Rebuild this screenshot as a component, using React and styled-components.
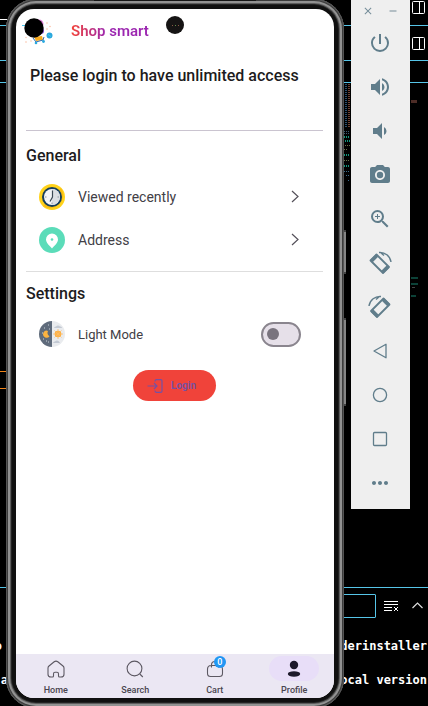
import React from "react";
import styled, { createGlobalStyle } from "styled-components";
import {
  MdPowerSettingsNew,
  MdVolumeUp,
  MdVolumeDown,
  MdPhotoCamera,
  MdZoomIn,
  MdMoreHoriz,
  MdClose,
  MdRemove,
} from "react-icons/md";

const Global = createGlobalStyle`
  *, *::before, *::after { box-sizing: border-box; }
  body { margin: 0; background: #000; }
  button { font: inherit; color: inherit; background: none; border: 0; padding: 0; cursor: pointer; }
  h1, h2, p { margin: 0; }
  svg { display: block; flex: none; }
`;

const Desktop = styled.div`
  position: relative;
  height: 100vh;
  min-height: 640px;
  overflow: hidden;
  background: #000;
  font-family: Roboto, sans-serif;
`;

/* ---------- code editor behind the emulator ---------- */

const Editor = styled.div`
  position: absolute;
  inset: 0;
  display: flex;
  flex-direction: column;
  color: #fff;
`;

const EditorBar = styled.div`
  display: flex;
  flex: none;
  align-items: ${(p) => p.$align || "center"};
  justify-content: space-between;
  height: ${(p) => p.$height}px;
  padding: 1px 3px 0 0;
  border-bottom: 1px solid #56c5e8;
`;

const SearchEdge = styled.span`
  align-self: flex-end;
  width: 12px;
  height: 6px;
  border-top: 1px solid #fff;
`;

const EditorBody = styled.div`
  display: flex;
  flex: 1;
  justify-content: space-between;
`;

const CurrentLine = styled.span`
  width: 12px;
  height: 18px;
  margin-top: 288px;
  border: solid #f38518;
  border-width: 1px 0;
`;

const Terminal = styled.div`
  flex: none;
  height: 119px;
  padding-top: 6px;
  border-top: 1px solid #56c5e8;
`;

const TerminalBar = styled.div`
  display: flex;
  align-items: center;
  justify-content: flex-end;
  gap: 14px;
  height: 24px;
  padding-right: 5px;
`;

const TerminalFilter = styled.input`
  width: 120px;
  height: 24px;
  margin-right: -6px;
  color: #fff;
  background: #000;
  border: 1px solid #56c5e8;
  border-radius: 1px;
`;

const TerminalLine = styled.p`
  display: flex;
  justify-content: space-between;
  padding: 0 1px 0 0;
  margin-top: ${(p) => (p.$first ? 11 : 0)}px;
  font: 700 12px/34px "DejaVu Sans Mono", monospace;
  white-space: pre;
`;

const LineStart = styled.span`
  display: flex;
  justify-content: flex-end;
  width: ${(p) => p.$width}px;
`;

/* ---------- emulator ---------- */

const Emulator = styled.div`
  position: relative;
  display: flex;
  align-items: flex-start;
  gap: 7px;
  padding: 0 18px 0 6px;
`;

const Phone = styled.div`
  position: relative;
  display: flex;
  flex: 1;
  height: calc(100vh + 3px);
  min-height: 643px;
  margin-top: -1px;
  padding: 10px;
  border-radius: 30px;
  background: #101010;
  box-shadow: inset 0 0 0 1px #555, inset 0 0 0 2px #3c3c3c, inset 0 0 0 4px #929292,
    inset 0 0 0 5px #5c5c5c, inset 0 0 0 6px #222;
`;

const SideKey = styled.span`
  position: absolute;
  top: ${(p) => p.$top}px;
  left: 100%;
  width: 2px;
  height: ${(p) => p.$height}px;
  background: #858585;
  border: solid #444;
  border-width: 2px 0;
`;

const Speaker = styled.span`
  position: absolute;
  top: 0;
  left: 26%;
  right: 26%;
  height: 2px;
  background: #161616;
`;

const Screen = styled.div`
  position: relative;
  display: flex;
  flex: 1;
  flex-direction: column;
  min-width: 0;
  overflow: hidden;
  border-radius: 18px;
  background: #fff;
  color: #1d1b20;
`;

const Camera = styled.span`
  position: absolute;
  top: 7px;
  left: 50%;
  display: flex;
  align-items: center;
  justify-content: center;
  gap: 2px;
  width: 18px;
  height: 18px;
  margin-left: -9px;
  border-radius: 50%;
  background: #161414;
`;

const Lens = styled.i`
  width: 1px;
  height: 1px;
  background: ${(p) => p.$color};
`;

const AppBar = styled.header`
  display: flex;
  align-items: center;
  gap: 16px;
  height: 43px;
  padding-left: 5px;
`;

const Title = styled.h1`
  font-size: 15px;
  line-height: 20px;
  font-weight: 600;
  color: transparent;
  background: linear-gradient(90deg, #f44336, #9c27b0 45%);
  background-clip: text;
`;

const Content = styled.main`
  flex: 1;
  display: flex;
  flex-direction: column;
  padding: 0 11px 0 10px;
`;

const Notice = styled.p`
  padding: 14px 0 44px 4px;
  font-size: 16px;
  line-height: 20px;
  font-weight: 500;
  white-space: nowrap;
`;

const Section = styled.section`
  display: flex;
  flex-direction: column;
  padding-top: ${(p) => p.$top}px;
  padding-bottom: ${(p) => p.$bottom}px;
  border-top: 1px solid ${(p) => p.$line};
`;

const SectionTitle = styled.h2`
  margin-bottom: 8px;
  font-size: 16px;
  line-height: 22px;
  font-weight: 500;
`;

const Row = styled.button`
  display: flex;
  align-items: center;
  gap: 13px;
  height: 43px;
  padding: 0 24px 0 13px;
  font-size: 14px;
  color: #424046;
  text-align: left;
`;

const SwitchRow = styled(Row).attrs({ as: "label" })`
  height: 42px;
  padding-right: 22px;
  font-size: 13px;
  cursor: pointer;
`;

const RowLabel = styled.span`
  flex: 1;
`;

const Switch = styled.input`
  appearance: none;
  display: flex;
  align-items: center;
  width: 40px;
  height: 25px;
  margin: 0;
  padding: 0 4px;
  border: 2px solid #8a858e;
  border-radius: 13px;
  background: #e6e0e9;
  &::before {
    content: "";
    width: 12px;
    height: 12px;
    border-radius: 50%;
    background: #79747e;
  }
  &:checked { justify-content: flex-end; }
`;

const LoginButton = styled.button`
  display: flex;
  align-items: center;
  align-self: center;
  gap: 8px;
  height: 31px;
  margin-top: 15px;
  padding: 0 20px 0 14px;
  border-radius: 16px;
  background: #f0433a;
  color: #7351a5;
  font-size: 10px;
  font-weight: 600;
`;

const NavBar = styled.nav`
  display: grid;
  grid-template-columns: repeat(4, 1fr);
  height: 44px;
  background: #ebe7f3;
`;

const NavItem = styled.button`
  display: flex;
  flex-direction: column;
  align-items: center;
  gap: 2px;
  padding-top: 2px;
  font-size: 9px;
  line-height: 14px;
  font-weight: 500;
  color: #49454f;
`;

const NavIcon = styled.span`
  position: relative;
  display: grid;
  place-items: center;
  width: 50px;
  height: 25px;
  border-radius: 13px;
  background: ${(p) => (p.$active ? "#e8def8" : "transparent")};
`;

const Badge = styled.span`
  position: absolute;
  top: 0;
  left: 24px;
  width: 12px;
  height: 12px;
  border-radius: 50%;
  background: #2196f3;
  color: #fff;
  font-size: 9px;
  line-height: 12px;
  text-align: center;
`;

const Toolbar = styled.aside`
  display: flex;
  flex: none;
  flex-direction: column;
  width: 59px;
  padding: 0 1px 4px 0;
  background: #efefef;
  color: #607d8b;
`;

const WindowControls = styled.div`
  display: flex;
  justify-content: center;
  gap: 13px;
  height: 21px;
  opacity: 0.85;
`;

const ToolButton = styled.button`
  display: grid;
  place-items: center;
  height: 44px;
`;

/* ---------- drawings ---------- */

const SplitIcon = () => (
  <svg width="13" height="13" viewBox="0 0 13 13" fill="none" stroke="#fff">
    <rect x=".5" y=".5" width="12" height="12" rx="1" />
    <path d="M7.5 1v11" />
  </svg>
);

const Minimap = () => (
  <svg width="84" height="220" viewBox="0 0 84 220" shapeRendering="crispEdges" strokeWidth="1">
    <g strokeDasharray="1 1">
      <path d="M1.5 1v44" stroke="#27506f" strokeWidth="2" />
      <path d="M5 1v44" stroke="#71412f" strokeWidth="2" />
      <path d="M0 48h6M0 50h6" stroke="#3a5875" />
      <path d="M0 54h5M1 58h5M0 72h6M0 83h6" stroke="#13987e" strokeWidth="2" />
      <path d="M1 62h5M0 66h4M0 77h6" stroke="#68714b" />
      <path d="M0 88h6M2 92h4M4 97h2" stroke="#3a6c8c" />
    </g>
    <path d="M67 18h6" stroke="#4d2c26" strokeWidth="3" />
    <path d="M67 195h7M67 201h7M67 213h5" stroke="#0c4238" strokeWidth="2" />
    <path d="M68 204h3" stroke="#444" />
  </svg>
);

const ClearIcon = () => (
  <svg width="14" height="11" viewBox="0 0 14 11" fill="none" stroke="#fff">
    <path d="M0 .5h14M0 3.5h14M0 6.5h8M0 9.5h8M10 6l4 4M14 6l-4 4" />
  </svg>
);

const ChevronUp = () => (
  <svg width="11" height="11" viewBox="0 0 11 11" fill="none" stroke="#ddd" strokeWidth="1.200">
    <path d="M.5 7l5-5 5 5" />
  </svg>
);

const Logo = () => (
  <svg width="34" height="28" viewBox="0 0 34 28">
    <circle cx="18" cy="7" r="4.500" fill="#e07fd8" />
    <circle cx="20" cy="14" r="3" fill="#7b4fd0" />
    <path d="M13 20l8-1 1 4-7 1z" fill="#f6a91d" />
    <path d="M12 21l3 4 7-2 1-3" fill="none" stroke="#2f6db5" />
    <circle cx="15" cy="26" r="1.300" fill="#28a9df" />
    <circle cx="22.500" cy="24.500" r="1.400" fill="#28a9df" />
    <circle cx="28.500" cy="18.500" r="3" fill="#2aa7dc" />
    <path d="M27 17.500l3 2M1 8.500h3" stroke="#45c4ed" />
    <circle cx="13" cy="11" r="9.700" fill="#000" />
    <g fill="#fbc0a5">
      <circle cx="26" cy="6" r=".8" /><circle cx="29" cy="9.500" r=".8" />
      <circle cx="26" cy="12" r=".8" /><circle cx="5" cy="20.500" r=".7" />
      <circle cx="5" cy="25" r=".8" /><circle cx="10" cy="24" r=".7" />
    </g>
  </svg>
);

const ClockIcon = () => (
  <svg width="26" height="26" viewBox="0 0 26 26">
    <circle cx="13" cy="13" r="13" fill="#ffd21a" />
    <path d="M22 4a13 13 0 0 1-18 18z" fill="#f9bd10" />
    <circle cx="13" cy="13" r="10" fill="#173f5c" />
    <circle cx="13" cy="13" r="8" fill="#f3f5f7" />
    <path d="M13 5a8 8 0 0 1 0 16z" fill="#dcdfe3" />
    <path d="M13.500 6.500V13l-2.500 4.500" fill="none" stroke="#3c4954" strokeWidth="1.200" />
    <path d="M6 13h1.500M18.500 13H20M13 18.500V20" stroke="#8e979e" />
  </svg>
);

const PinIcon = () => (
  <svg width="26" height="26" viewBox="0 0 26 26">
    <circle cx="13" cy="13" r="13" fill="#5bdcb9" />
    <path d="M13 21.500c-2-2.500-6-5.300-6-9a6 6 0 0 1 12 0c0 3.700-4 6.500-6 9z" fill="#fff" />
    <circle cx="13" cy="12.500" r="1.300" fill="#5bdcb9" />
  </svg>
);

const ThemeIcon = () => (
  <svg width="26" height="26" viewBox="0 0 26 26">
    <path d="M13 0a13 13 0 0 0 0 26z" fill="#5f6b7b" />
    <path d="M13 0a13 13 0 0 1 0 26z" fill="#e9ebee" />
    <path d="M9 10a3.500 3.500 0 1 0 1.500 5.200A3.700 3.700 0 0 1 9 10z" fill="#fdb440" />
    <circle cx="19" cy="13" r="3.300" fill="#ffad3a" />
    <path d="M19 8v10M14 13h10M15.500 9.500l7 7M22.500 9.500l-7 7" stroke="#fdbd66" strokeWidth=".8" />
    <path d="M15 7a2 2 0 0 1 2-1.500 2.500 2.500 0 0 1 4 0c1 0 2 .5 2 1.500zM14 22a2 2 0 0 1 2-1.500 2.500 2.500 0 0 1 4 0l1 1.500z" fill="#c3c9d3" />
    <path d="M9 4h1M5 7h1M3 12h1M4 18h1M9 21h1M10 8h1M7 20h1" stroke="#ccd2da" />
  </svg>
);

const ChevronRight = () => (
  <svg width="8" height="13" viewBox="0 0 8 13" fill="none" stroke="#55515a" strokeWidth="1.200">
    <path d="M1 1l6 5.500L1 12" />
  </svg>
);

const LoginIcon = () => (
  <svg width="16" height="14" viewBox="0 0 16 14" fill="none" stroke="currentColor" strokeWidth="1.200">
    <path d="M.5 7H10M7 4l3 3-3 3M8 2.500C8 1.300 8.500.7 9.300.7h4.400c.8 0 1.300.5 1.300 1.300v10c0 .8-.5 1.300-1.300 1.300H9.300c-.8 0-1.300-.5-1.300-1.800" />
  </svg>
);

const navSvg = { width: 18, height: 18, viewBox: "0 0 18 18", fill: "none", stroke: "#5d5963", strokeWidth: 1.1 };

const HomeIcon = () => (
  <svg {...navSvg}>
    <path d="M6.500 15.500v-1.700c0-.9.700-1.500 1.500-1.500h2c.8 0 1.500.6 1.500 1.500V16c0 .6.500 1 1 1h1.500c1.700 0 3-1.200 3-2.800V8c0-.8-.4-1.500-1-2l-5.200-4.200a3 3 0 0 0-3.600 0L2 6c-.6.500-1 1.200-1 2v6.200C1 15.800 2.300 17 4 17h1.500c.6 0 1-.4 1-1z" />
  </svg>
);

const SearchIcon = () => (
  <svg {...navSvg}>
    <circle cx="8.500" cy="8.500" r="7.400" />
    <path d="M13.800 14l3 3" />
  </svg>
);

const BagIcon = () => (
  <svg {...navSvg}>
    <path d="M5 5.500h8c2.300 0 3.500 1.500 3.500 4v4c0 2-1.300 3-3.100 3H4.600c-1.800 0-3.100-1-3.100-3v-4c0-2.500 1.200-4 3.500-4zM5.500 7.500V5a3.500 3.500 0 0 1 7 0v2.500" />
  </svg>
);

const ProfileIcon = () => (
  <svg width="18" height="18" viewBox="0 0 18 18" fill="#1d192b">
    <circle cx="9" cy="5" r="4.200" />
    <ellipse cx="9" cy="14" rx="6.200" ry="2.700" />
  </svg>
);

const RotateIcon = ({ right }) => (
  <svg width="24" height="24" viewBox="0 0 24 24" fill="none" stroke="currentColor">
    <g transform={right ? "matrix(-1 0 0 1 24 0)" : undefined}>
      <path d="M8.500 3.500l-6 6L15 22l6-6z" strokeWidth="1.800" strokeLinejoin="round" />
      <path d="M9 4.500l-5.500 5.500M14.500 21l5.500-5.500" strokeWidth="3.400" />
      <path d="M11 1.500c6-.5 11 3.500 12 9.500M12.500 1.500L16 4.500" strokeWidth="1.400" />
    </g>
  </svg>
);

const BackIcon = () => (
  <svg width="16" height="16" viewBox="0 0 16 16" fill="none" stroke="currentColor" strokeWidth="1.300">
    <path d="M14 1.200v13.600L2 8z" strokeLinejoin="round" />
  </svg>
);

const CircleIcon = () => (
  <svg width="16" height="16" viewBox="0 0 16 16" fill="none" stroke="currentColor" strokeWidth="1.300">
    <circle cx="8" cy="8" r="6.600" />
  </svg>
);

const SquareIcon = () => (
  <svg width="16" height="16" viewBox="0 0 16 16" fill="none" stroke="currentColor" strokeWidth="1.300">
    <rect x="1.500" y="1.500" width="13" height="13" rx="1" />
  </svg>
);

const tools = [
  ["Power", <MdPowerSettingsNew size={24} />],
  ["Volume up", <MdVolumeUp size={24} />],
  ["Volume down", <MdVolumeDown size={24} />],
  ["Take screenshot", <MdPhotoCamera size={24} />],
  ["Zoom", <MdZoomIn size={24} />],
  ["Rotate left", <RotateIcon />],
  ["Rotate right", <RotateIcon right />],
  ["Back", <BackIcon />],
  ["Home", <CircleIcon />],
  ["Overview", <SquareIcon />],
  ["More", <MdMoreHoriz size={24} />],
];

const tabs = [
  { label: "Home", icon: <HomeIcon /> },
  { label: "Search", icon: <SearchIcon /> },
  { label: "Cart", icon: <BagIcon />, badge: "0" },
  { label: "Profile", icon: <ProfileIcon />, active: true },
];

export default function App() {
  return (
    <Desktop>
      <Global />
      <Editor>
        <EditorBar $height={26} $align="flex-start">
          <SearchEdge />
          <SplitIcon />
        </EditorBar>
        <EditorBar $height={35}>
          <span />
          <SplitIcon />
        </EditorBar>
        <EditorBar $height={22} />
        <EditorBody>
          <CurrentLine />
          <Minimap />
        </EditorBody>
        <Terminal>
          <TerminalBar>
            <TerminalFilter aria-label="Filter" />
            <ClearIcon />
            <ChevronUp />
          </TerminalBar>
          <TerminalLine $first>
            <LineStart $width={2}>o</LineStart>
            <span>derinstaller</span>
          </TerminalLine>
          <TerminalLine>
            <LineStart $width={8}>a</LineStart>
            <span>ocal version</span>
          </TerminalLine>
        </Terminal>
      </Editor>

      <Emulator>
        <Phone>
          <Speaker />
          <SideKey $top={231} $height={44} />
          <SideKey $top={319} $height={88} />
          <Screen>
            <AppBar>
              <Logo />
              <Title>Shop smart</Title>
            </AppBar>
            <Camera>
              <Lens $color="#8a5a44" />
              <Lens $color="#5c8a4c" />
              <Lens $color="#8a5a44" />
            </Camera>
            <Content>
              <Notice>Please login to have unlimited access</Notice>
              <Section $line="#cac4d0" $top={14} $bottom={10}>
                <SectionTitle>General</SectionTitle>
                <Row>
                  <ClockIcon />
                  <RowLabel>Viewed recently</RowLabel>
                  <ChevronRight />
                </Row>
                <Row>
                  <PinIcon />
                  <RowLabel>Address</RowLabel>
                  <ChevronRight />
                </Row>
              </Section>
              <Section $line="#dedede" $top={11} $bottom={0}>
                <SectionTitle>Settings</SectionTitle>
                <SwitchRow>
                  <ThemeIcon />
                  <RowLabel>Light Mode</RowLabel>
                  <Switch type="checkbox" role="switch" />
                </SwitchRow>
              </Section>
              <LoginButton>
                <LoginIcon />
                Login
              </LoginButton>
            </Content>
            <NavBar>
              {tabs.map((t) => (
                <NavItem key={t.label} aria-current={t.active ? "page" : undefined}>
                  <NavIcon $active={t.active}>
                    {t.icon}
                    {t.badge && <Badge>{t.badge}</Badge>}
                  </NavIcon>
                  {t.label}
                </NavItem>
              ))}
            </NavBar>
          </Screen>
        </Phone>
        <Toolbar>
          <WindowControls>
            <button aria-label="Close"><MdClose size={12} /></button>
            <button aria-label="Minimize"><MdRemove size={12} /></button>
          </WindowControls>
          {tools.map(([label, icon]) => (
            <ToolButton key={label} aria-label={label}>{icon}</ToolButton>
          ))}
        </Toolbar>
      </Emulator>
    </Desktop>
  );
}
